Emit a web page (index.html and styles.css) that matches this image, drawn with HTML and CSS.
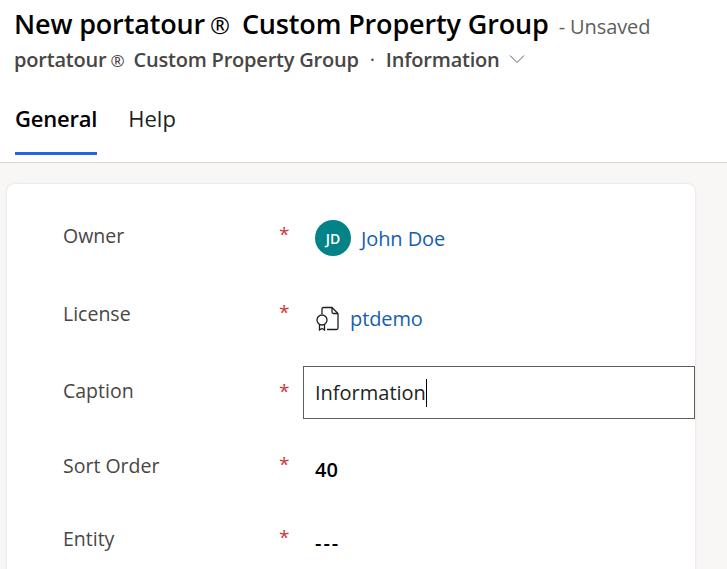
FILE: index.html
```html
<!DOCTYPE html>
<html lang="en">
<head>
<meta charset="utf-8">
<title>New portatour Custom Property Group</title>
<link rel="stylesheet" href="styles.css">
</head>
<body>
<header class="header">
  <div class="title-row">
    <h1 class="title">New portatour<span class="reg">®</span>Custom Property Group</h1>
    <span class="status">- Unsaved</span>
  </div>
  <div class="sub-row">
    <span class="entity">portatour<span class="reg-sub">®</span>Custom Property Group</span>
    <span class="dot">·</span>
    <span class="form-name">Information</span>
    <svg class="chevron" width="16" height="10" viewBox="0 0 16 10"><path d="M1 1.5 L8 8.5 L15 1.5" fill="none" stroke="#605e5c" stroke-width="1"/></svg>
  </div>
  <nav class="tabs">
    <span class="tab tab-active">General</span>
    <span class="tab">Help</span>
  </nav>
</header>
<main class="canvas">
  <section class="card">
    <div class="row row-owner">
      <span class="label">Owner</span><span class="req">*</span>
      <div class="value">
        <span class="avatar">JD</span>
        <a class="link">John Doe</a>
      </div>
    </div>
    <div class="row row-license">
      <span class="label">License</span><span class="req">*</span>
      <div class="value">
        <svg class="doc" width="25" height="25" viewBox="0 0 25 25" fill="none" stroke="#201f1e" stroke-width="1.3">
          <path d="M7 8 V3 Q7 1.5 8.5 1.5 H17 L23 7.5 V22 Q23 23.5 21.5 23.5 H12"/>
          <path d="M17 1.5 V6 Q17 7.5 18.5 7.5 H23"/>
          <circle cx="7" cy="14" r="5"/>
          <path d="M4.5 18.5 V24 L7 22.5 L9.5 24 V18.5"/>
        </svg>
        <a class="link">ptdemo</a>
      </div>
    </div>
    <div class="row row-caption">
      <span class="label">Caption</span><span class="req">*</span>
      <div class="input"><span>Information</span><span class="caret"></span></div>
    </div>
    <div class="row row-sort">
      <span class="label">Sort Order</span><span class="req">*</span>
      <div class="value strong">40</div>
    </div>
    <div class="row row-entity">
      <span class="label">Entity</span><span class="req">*</span>
      <div class="value strong dashes">---</div>
    </div>
  </section>
</main>
</body>
</html>
```
FILE: styles.css
```css
* { box-sizing: border-box; }
html, body { margin: 0; height: 100%; overflow: hidden; }
body {
  width: 727px;
  height: 569px;
  display: flex;
  flex-direction: column;
  background: #fff;
  font-family: "Open Sans", "Noto Sans", sans-serif;
  color: #201f1e;
}
.header { height: 163px; border-bottom: 1px solid #d9d8d6; padding: 5px 0 0 14px; flex: none; }
.title-row { display: flex; align-items: baseline; height: 38px; }
.title { margin: 0; font-size: 27px; font-weight: 600; line-height: 38px; color: #000; letter-spacing: -0.15px; white-space: nowrap; }
.reg { font-weight: 400; margin: 0 12px 0 5px; font-size: 24px; }
.reg-sub { font-weight: 400; margin: 0 9px 0 4px; font-size: 17px; }
.status { margin-left: 10px; font-size: 20px; color: #605e5c; letter-spacing: -0.1px; }
.sub-row { display: flex; align-items: center; height: 28px; margin-top: 2px; font-size: 20px; font-weight: 600; color: #484644; white-space: nowrap; letter-spacing: -0.2px; }
.dot { margin: 0 11px; font-weight: 400; }
.chevron { margin-left: 9px; }
.tabs { display: flex; gap: 31px; margin-top: 25px; padding-left: 1px; }
.tab { height: 57px; padding-top: 5px; font-size: 22px; line-height: 30px; color: #201f1e; }
.tab-active { font-weight: 600; color: #000; border-bottom: 3px solid #2266e3; letter-spacing: -0.2px; }
.canvas { flex: 1; background: #f8f7f6; padding: 21px 32px 0 7px; min-height: 0; overflow: hidden; }
.card { background: #fff; border-radius: 8px 8px 0 0; height: 400px; box-shadow: 0 0 3px rgba(0,0,0,.12); padding: 36px 0 0 56px; }
.row { display: grid; grid-template-columns: 216px 24px 1fr; align-items: start; }
.label { font-size: 19.5px; color: #484644; line-height: 28px; padding-top: 2px; height: 30px; box-sizing: content-box; }
.req { color: #d13438; font-size: 19px; line-height: 28px; }
.value { display: flex; align-items: center; gap: 10px; padding-left: 12px; }
.row-owner { height: 78px; }
.row-license { height: 68px; }
.row-caption { height: 84px; }
.row-sort { height: 73px; }
.row-owner .value { height: 36px; }
.row-license .value { height: 40px; }
.row-caption .label, .row-caption .req { padding-top: 11px; }
.row-sort .value, .row-entity .value { height: 38px; padding-top: 0; }
.row-license .label { padding-top: 2px; }
.avatar { width: 36px; height: 36px; border-radius: 50%; background: #038387; color: #fff; display: flex; align-items: center; justify-content: center; font-size: 14px; font-weight: 600; flex: none; }
.link { font-size: 20px; font-weight: 500; color: #1460b0; letter-spacing: -0.1px; }
.input { width: 392px; height: 53px; border: 1px solid #605e5c; display: flex; align-items: center; padding-left: 11px; font-size: 20px; color: #201f1e; }
.caret { width: 1px; height: 28px; background: #000; margin-left: 0; }
.strong { font-size: 20px; font-weight: 600; color: #000; }
.dashes { letter-spacing: 2px; }
```
